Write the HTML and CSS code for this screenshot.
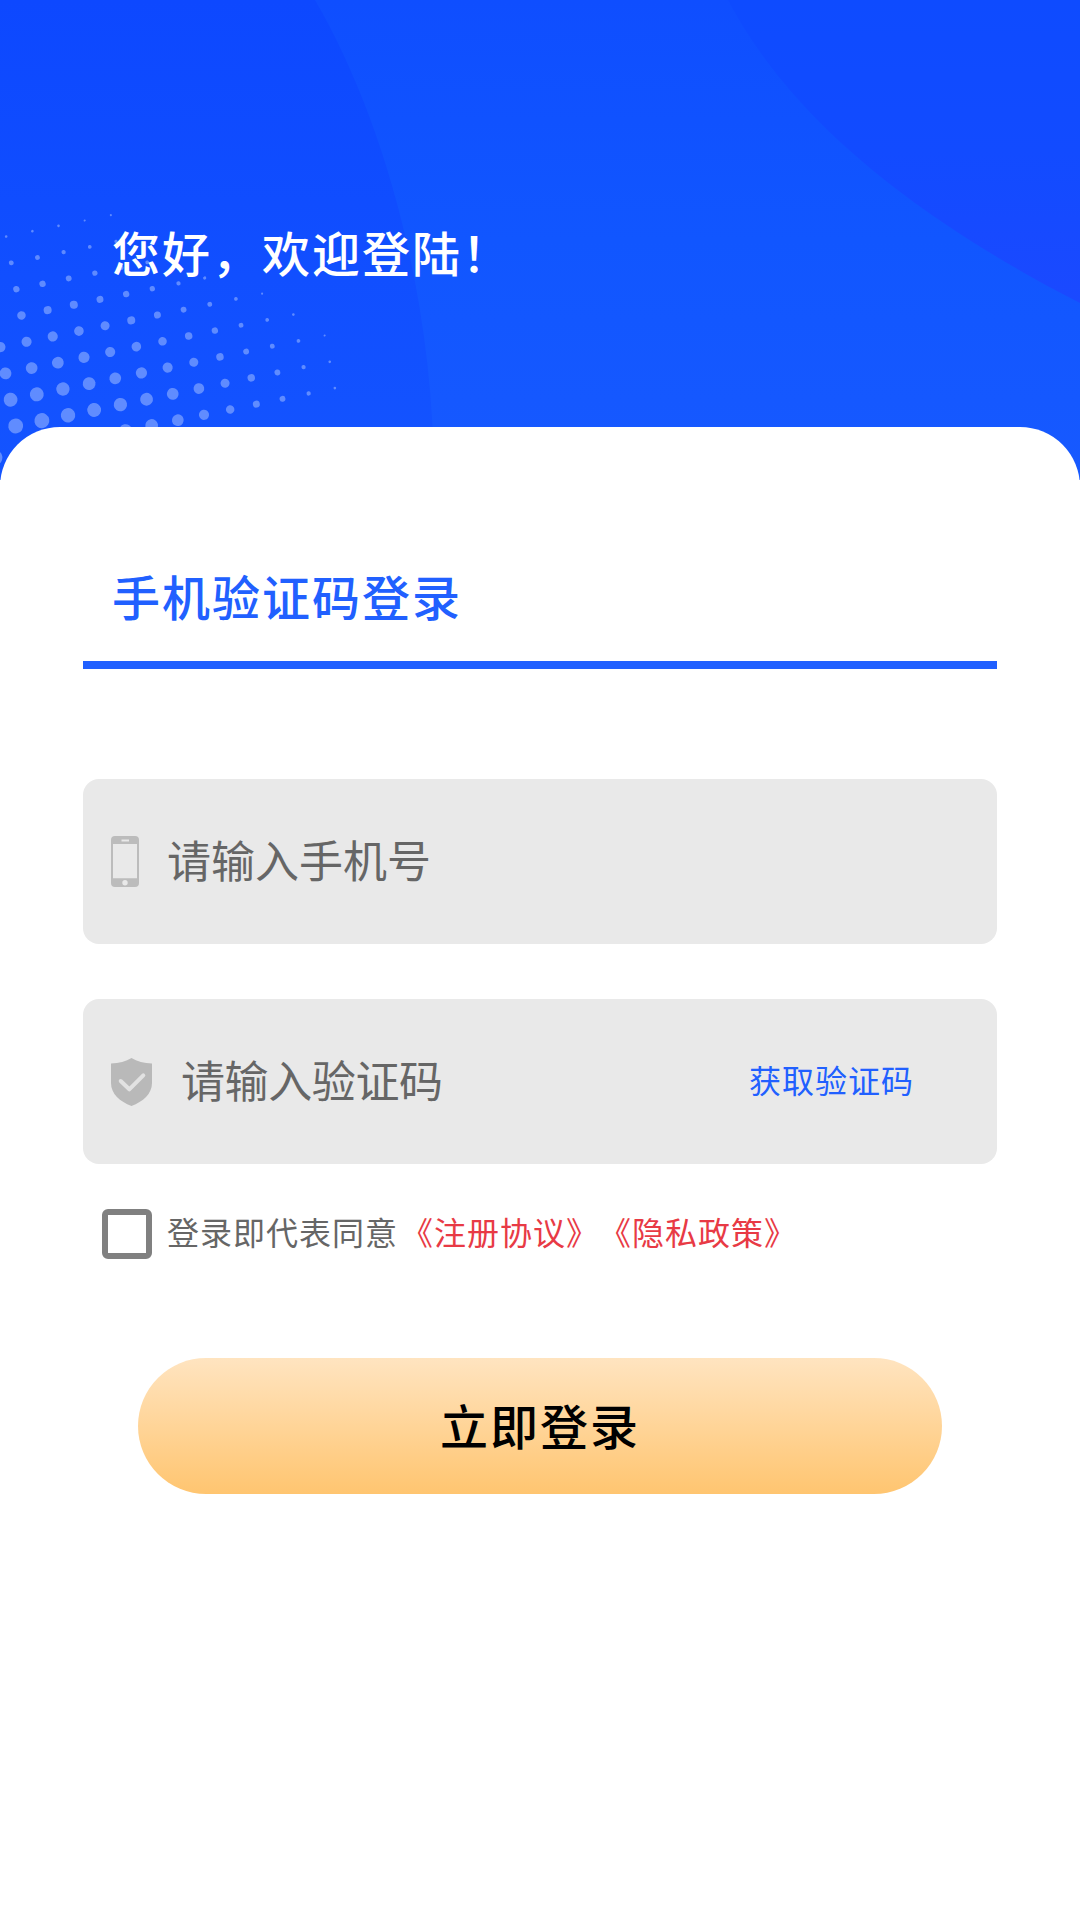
FILE: index.html
```html
<!DOCTYPE html>
<html lang="zh-CN">
<head>
<meta charset="utf-8">
<title>登录</title>
<link rel="stylesheet" href="styles.css">
</head>
<body>
<main class="page">
  <header class="hero">
    <svg class="hero-art" viewBox="0 0 1080 480" preserveAspectRatio="none" aria-hidden="true">
      <defs>
        <linearGradient id="base" gradientUnits="userSpaceOnUse" x1="0" y1="0" x2="0" y2="480">
          <stop offset="0" stop-color="#0d48ff"/>
          <stop offset="1" stop-color="#1454ff"/>
        </linearGradient>
        <linearGradient id="wedge" gradientUnits="userSpaceOnUse" x1="0" y1="0" x2="0" y2="480">
          <stop offset="0" stop-color="#0f4eff"/>
          <stop offset=".5" stop-color="#1156ff"/>
          <stop offset="1" stop-color="#1759ff"/>
        </linearGradient>
        <linearGradient id="corner" gradientUnits="userSpaceOnUse" x1="0" y1="0" x2="0" y2="303">
          <stop offset="0" stop-color="#0e4bff"/>
          <stop offset=".5" stop-color="#124bff"/>
          <stop offset="1" stop-color="#1b49ff"/>
        </linearGradient>
      </defs>
      <rect width="1080" height="480" fill="url(#base)"/>
      <path d="M315 0C385 120 434 300 434 480H1080V0Z" fill="url(#wedge)"/>
      <path d="M728 0C770 80 860 190 1080 303V0Z" fill="url(#corner)"/>
      <g class="dots" transform="matrix(26.17 -5.35 -5.1 -26.3 15.7 426)">
        <circle cx="-1" cy="-1" r=".29"/>
        <circle cx="4" cy="-1" r=".25"/><circle cx="5" cy="-1" r=".24"/><circle cx="6" cy="-1" r=".22"/><circle cx="7" cy="-1" r=".19"/><circle cx="8" cy="-1" r=".16"/><circle cx="9" cy="-1" r=".13"/><circle cx="10" cy="-1" r=".11"/><circle cx="11" cy="-1" r=".08"/><circle cx="12" cy="-1" r=".05"/>
        <circle cx="0" cy="0" r=".28"/><circle cx="1" cy="0" r=".28"/><circle cx="2" cy="0" r=".27"/><circle cx="3" cy="0" r=".26"/><circle cx="4" cy="0" r=".25"/><circle cx="5" cy="0" r=".24"/><circle cx="6" cy="0" r=".22"/><circle cx="7" cy="0" r=".2"/><circle cx="8" cy="0" r=".17"/><circle cx="9" cy="0" r=".14"/><circle cx="10" cy="0" r=".11"/><circle cx="11" cy="0" r=".08"/><circle cx="12" cy="0" r=".05"/>
        <circle cx="0" cy="1" r=".26"/><circle cx="1" cy="1" r=".26"/><circle cx="2" cy="1" r=".25"/><circle cx="3" cy="1" r=".24"/><circle cx="4" cy="1" r=".22"/><circle cx="5" cy="1" r=".21"/><circle cx="6" cy="1" r=".19"/><circle cx="7" cy="1" r=".17"/><circle cx="8" cy="1" r=".14"/><circle cx="9" cy="1" r=".11"/><circle cx="10" cy="1" r=".09"/><circle cx="11" cy="1" r=".07"/><circle cx="12" cy="1" r=".04"/>
        <circle cx="0" cy="2" r=".22"/><circle cx="1" cy="2" r=".22"/><circle cx="2" cy="2" r=".22"/><circle cx="3" cy="2" r=".21"/><circle cx="4" cy="2" r=".19"/><circle cx="5" cy="2" r=".18"/><circle cx="6" cy="2" r=".16"/><circle cx="7" cy="2" r=".14"/><circle cx="8" cy="2" r=".12"/><circle cx="9" cy="2" r=".09"/><circle cx="10" cy="2" r=".07"/><circle cx="11" cy="2" r=".05"/>
        <circle cx="0" cy="3" r=".19"/><circle cx="1" cy="3" r=".19"/><circle cx="2" cy="3" r=".19"/><circle cx="3" cy="3" r=".18"/><circle cx="4" cy="3" r=".17"/><circle cx="5" cy="3" r=".15"/><circle cx="6" cy="3" r=".13"/><circle cx="7" cy="3" r=".11"/><circle cx="8" cy="3" r=".09"/><circle cx="9" cy="3" r=".07"/><circle cx="10" cy="3" r=".04"/>
        <circle cx="1" cy="4" r=".16"/><circle cx="2" cy="4" r=".15"/><circle cx="3" cy="4" r=".15"/><circle cx="4" cy="4" r=".13"/><circle cx="5" cy="4" r=".12"/><circle cx="6" cy="4" r=".1"/><circle cx="7" cy="4" r=".08"/><circle cx="8" cy="4" r=".06"/>
        <circle cx="1" cy="5" r=".12"/><circle cx="2" cy="5" r=".12"/><circle cx="3" cy="5" r=".11"/><circle cx="4" cy="5" r=".1"/><circle cx="5" cy="5" r=".09"/><circle cx="6" cy="5" r=".07"/>
        <circle cx="1" cy="6" r=".09"/><circle cx="2" cy="6" r=".09"/><circle cx="3" cy="6" r=".08"/><circle cx="4" cy="6" r=".07"/><circle cx="5" cy="6" r=".06"/>
        <circle cx="1" cy="7" r=".05"/><circle cx="2" cy="7" r=".05"/><circle cx="3" cy="7" r=".05"/><circle cx="4" cy="7" r=".04"/><circle cx="5" cy="7" r=".04"/>
      </g>
    </svg>
    <h1 class="welcome">您好，欢迎登陆！</h1>
  </header>

  <section class="card">
    <div class="tab">手机验证码登录</div>

    <div class="field field-phone">
      <svg class="icon-phone" viewBox="0 0 28 51" aria-hidden="true">
        <path fill-rule="evenodd" d="M4 0H24A4 4 0 0 1 28 4V47A4 4 0 0 1 24 51H4A4 4 0 0 1 0 47V4A4 4 0 0 1 4 0ZM2 8V42.300H26V8ZM10.500 3.500V5.500H18V3.500ZM14 44A2.700 2.700 0 1 0 14 49.400A2.700 2.700 0 1 0 14 44Z"/>
      </svg>
      <span class="placeholder">请输入手机号</span>
    </div>

    <div class="field field-code">
      <svg class="icon-shield" viewBox="0 0 41 48" aria-hidden="true">
        <path class="shield-body" d="M20.500 0C26 3.500 33 5.300 41 5.500V25C41 36 32 43.500 20.500 48C9 43.500 0 36 0 25V5.500C8 5.300 15 3.500 20.500 0Z"/>
        <path class="shield-check" d="M9.700 23L18.300 31.300L32.300 17.300"/>
      </svg>
      <span class="placeholder placeholder-code">请输入验证码</span>
      <span class="send-code">获取验证码</span>
    </div>

    <div class="agreement">
      <span class="checkbox"></span>
      <span class="agree-text">登录即代表同意<span class="agree-link">《注册协议》《隐私政策》</span></span>
    </div>

    <button class="submit" type="button">立即登录</button>
  </section>
</main>
</body>
</html>
```

FILE: styles.css
```css
* { box-sizing: border-box; }

html, body {
  margin: 0;
  padding: 0;
  background: #fff;
}

body {
  font-family: "Noto Sans CJK SC", "Noto Sans", sans-serif;
  text-spacing-trim: space-all;
}

.page {
  width: 1080px;
  height: 1920px;
  position: relative;
  overflow: hidden;
  background: #fff;
}

.hero {
  height: 427px;
  padding: 218px 0 0 112px;
}

.hero-art {
  position: absolute;
  left: 0;
  top: 0;
  width: 1080px;
  height: 480px;
}

.dots circle { fill: #8fb0ff; fill-opacity: .62; }

.welcome {
  position: relative;
  margin: 0;
  font-size: 48px;
  line-height: 66px;
  font-weight: 500;
  letter-spacing: 2px;
  color: #fff;
}

.card {
  position: relative;
  height: 1493px;
  padding: 0 83px;
  background: #fff;
  border-radius: 60px 60px 0 0;
}

.tab {
  height: 242px;
  padding: 135px 0 0 29px;
  border-bottom: 8px solid #2160ff;
  margin-bottom: 110px;
  font-size: 48px;
  line-height: 66px;
  font-weight: 500;
  letter-spacing: 2px;
  color: #2160ff;
}

.field {
  display: flex;
  align-items: center;
  height: 165px;
  padding-left: 28px;
  border-radius: 16px;
  background: #e9e9e9;
  margin-bottom: 55px;
}

.icon-phone {
  width: 28px;
  height: 51px;
  margin-right: 28px;
  fill: #bcbcbc;
  flex: none;
}

.icon-shield {
  width: 41px;
  height: 48px;
  margin-right: 29px;
  flex: none;
}

.shield-body { fill: #b9b9b9; }

.shield-check {
  fill: none;
  stroke: #e2e2e2;
  stroke-width: 4;
  stroke-linecap: round;
  stroke-linejoin: round;
}

.placeholder {
  padding-bottom: 5px;
  font-size: 44px;
  line-height: 60px;
  color: #666;
}

.placeholder-code { letter-spacing: -.4px; }

.send-code {
  margin-left: auto;
  margin-right: 83px;
  padding-bottom: 5px;
  font-size: 32px;
  line-height: 44px;
  letter-spacing: 1px;
  color: #2160ff;
}

.field-code { margin-bottom: 45px; }

.agreement {
  display: flex;
  align-items: center;
  padding-left: 19px;
  height: 50px;
}

.checkbox {
  width: 50px;
  height: 50px;
  border: 6px solid #808080;
  border-radius: 6px;
  margin-right: 15px;
  flex: none;
}

.agree-text {
  padding-bottom: 6px;
  font-size: 32px;
  line-height: 44px;
  letter-spacing: 1px;
  color: #666;
}

.agree-link {
  margin-left: 3px;
  color: #e83a45;
}

.submit {
  display: block;
  width: 804px;
  height: 136px;
  margin: 99px auto 0;
  padding: 0 0 5px;
  border: 0;
  border-radius: 68px;
  background: linear-gradient(180deg, #ffe4c0 0%, #ffc570 100%);
  font-family: inherit;
  font-size: 48px;
  font-weight: 500;
  letter-spacing: 2px;
  color: #000;
}
```
